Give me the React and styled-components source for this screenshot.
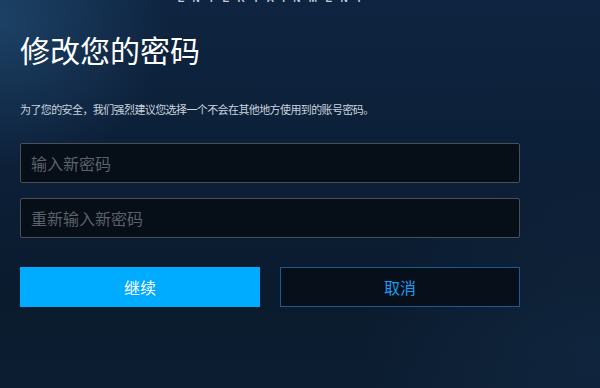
import React from "react";
import styled, { createGlobalStyle } from "styled-components";

const Global = createGlobalStyle`
  html, body { margin: 0; padding: 0; height: 100%; }
  body {
    font-family: "Noto Sans CJK SC", "Noto Sans", sans-serif;
    background: #0c1d31;
  }
  #root { min-height: 100%; }
`;

const Page = styled.div`
  width: 600px;
  height: 388px;
  overflow: hidden;
  box-sizing: border-box;
  padding: 0 20px;
  background:
    radial-gradient(ellipse 170px 150px at 0px 20px, rgba(50, 110, 160, 0.4), rgba(50, 110, 160, 0) 100%),
    radial-gradient(ellipse 240px 180px at 600px 350px, rgba(30, 70, 110, 0.22), rgba(30, 70, 110, 0) 100%),
    linear-gradient(180deg, #0e2440 0%, #0c1f37 45%, #0b1b2e 75%, #0c1d31 100%);
`;

const Column = styled.div`
  width: 500px;
  display: flex;
  flex-direction: column;
`;

const LogoStrip = styled.div`
  height: 3px;
  overflow: hidden;
  display: flex;
  justify-content: center;
`;

const LogoText = styled.span`
  display: block;
  margin-top: -6px;
  font-family: "Liberation Sans", Arial, sans-serif;
  font-weight: bold;
  font-size: 10px;
  line-height: 10px;
  letter-spacing: 8.3px;
  padding-left: 8px;
  color: #c4ccd6;
`;

const Title = styled.h1`
  margin: 26px 0 0;
  font-size: 30px;
  line-height: 40px;
  font-weight: normal;
  color: #ffffff;
`;

const Note = styled.p`
  margin: 32px 0 0;
  font-size: 11px;
  line-height: 16px;
  letter-spacing: -0.6px;
  color: #c9d3de;
`;

const Field = styled.input`
  box-sizing: border-box;
  width: 500px;
  height: 40px;
  margin-top: ${(p) => p.$gap}px;
  padding: 0 10px;
  border: 1px solid #4a5058;
  border-radius: 2px;
  background: #060e18;
  color: #ffffff;
  font-family: "Noto Sans CJK SC", sans-serif;
  font-size: 16px;
  outline: none;
  &::placeholder { color: #5c6168; }
`;

const Actions = styled.div`
  display: grid;
  grid-template-columns: 240px 240px;
  gap: 20px;
  margin-top: 29px;
`;

const Button = styled.button`
  box-sizing: border-box;
  height: 40px;
  border-radius: 0;
  font-family: "Noto Sans CJK SC", sans-serif;
  font-size: 16px;
  cursor: pointer;
  border: 1px solid ${(p) => (p.$primary ? "#00acff" : "#1b5b93")};
  background: ${(p) => (p.$primary ? "#00acff" : "#07101a")};
  color: ${(p) => (p.$primary ? "#ffffff" : "#1a9cf2")};
`;

export default function App() {
  return (
    <>
      <Global />
      <Page>
        <Column>
          <LogoStrip>
            <LogoText>ENTERTAINMENT</LogoText>
          </LogoStrip>
          <Title>修改您的密码</Title>
          <Note>为了您的安全，我们强烈建议您选择一个不会在其他地方使用到的账号密码。</Note>
          <Field $gap={26} type="password" placeholder="输入新密码" />
          <Field $gap={15} type="password" placeholder="重新输入新密码" />
          <Actions>
            <Button $primary>继续</Button>
            <Button>取消</Button>
          </Actions>
        </Column>
      </Page>
    </>
  );
}
